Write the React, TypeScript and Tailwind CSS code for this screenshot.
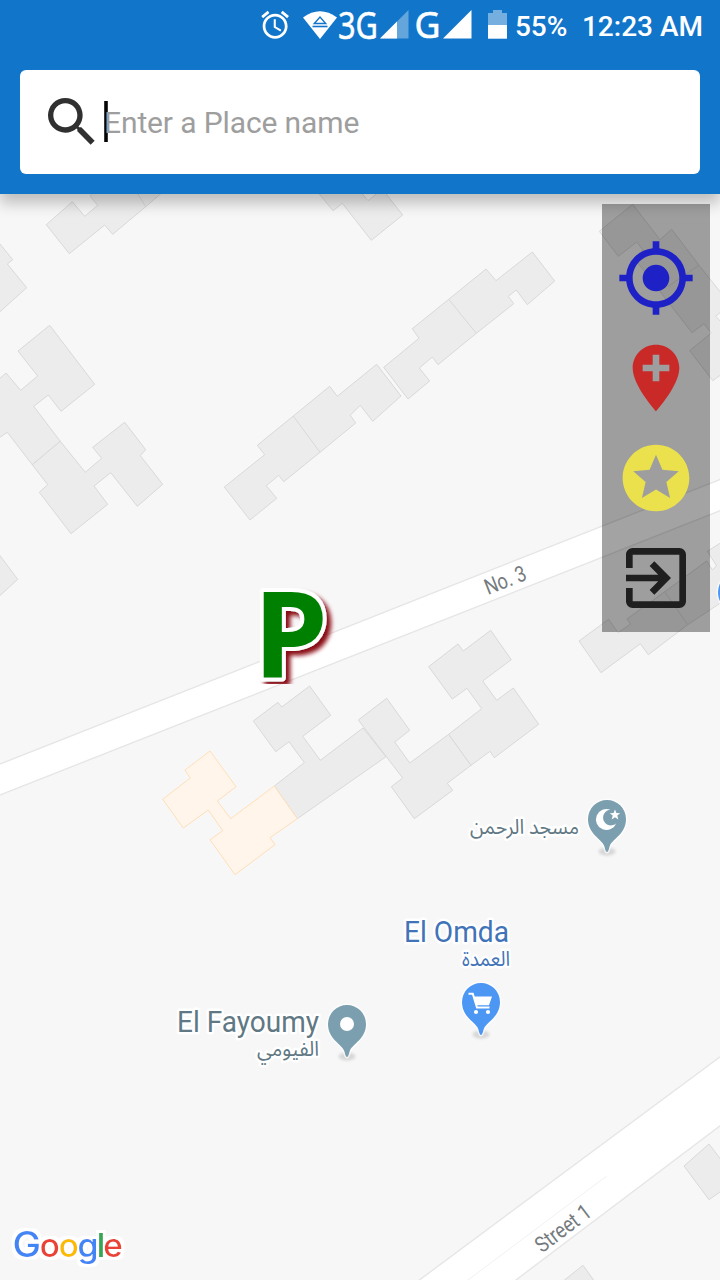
import React from "react";

const BLUE = "#1175ca";

function StatusBar() {
  return (
    <div className="flex h-[50px] items-start justify-end pr-[17px] text-white">
      <svg className="h-[50px] w-[260px] shrink-0" viewBox="250 0 260 50" fill="#fff">
        <path
          transform="translate(258.5 8.2) scale(1.385)"
          d="M22 5.72l-4.6-3.86-1.29 1.53 4.6 3.86L22 5.72zM7.88 3.39L6.6 1.86 2 5.71l1.29 1.53 4.59-3.85zM12.5 8H11v6l4.75 2.85.75-1.23-4-2.37V8zM12 4c-4.97 0-9 4.03-9 9s4.02 9 9 9c4.97 0 9-4.03 9-9s-4.03-9-9-9zm0 16c-3.87 0-7-3.13-7-7s3.13-7 7-7 7 3.13 7 7-3.13 7-7 7z"
        />
        <path d="M303 17.5Q320 5 337 17.5L320 39z" />
        <path d="M314.3 23.5L320 17L325.7 23.5z" fill="none" stroke={BLUE} strokeWidth="1.4" />
        <path d="M312.5 26.5H327.5" stroke={BLUE} strokeWidth="1.6" />
        <text x="338" y="39" fontSize="37.5" fontFamily="Noto Sans, sans-serif" stroke="#fff" strokeWidth="0.5" textLength="40" lengthAdjust="spacingAndGlyphs">3G</text>
        <path d="M408.5 10V38.5H380z" opacity="0.35" />
        <path d="M397 21.5V38.5H380z" />
        <text x="414.5" y="37.5" fontSize="36" fontFamily="Noto Sans, sans-serif" stroke="#fff" strokeWidth="0.6" textLength="26" lengthAdjust="spacingAndGlyphs">G</text>
        <path d="M471.5 10V38.5H443z" />
        <path d="M488 13H493V10H502V13H507V25H488z" opacity="0.42" />
        <path d="M488 25H507V38.7H488z" />
      </svg>
      <span className="ml-[5px] mt-[9px] w-[67px] whitespace-nowrap font-[Roboto,sans-serif] text-[28px] font-medium leading-[36px]">55%</span>
      <span className="mt-[9px] whitespace-nowrap font-[Roboto,sans-serif] text-[28px] font-medium leading-[36px]">12:23 AM</span>
    </div>
  );
}

function SearchBox() {
  return (
    <div className="mx-5 mt-5 flex h-[104px] items-center rounded-[6px] bg-white pl-5">
      <svg className="size-16 shrink-0" viewBox="0 0 24 24" fill="#303030">
        <path d="M15.5 14h-.79l-.28-.27A6.471 6.471 0 0 0 16 9.5 6.5 6.5 0 1 0 9.5 16c1.61 0 3.09-.59 4.23-1.57l.27.28v.79l5 4.99L20.49 19l-4.99-5zm-6 0C7.01 14 5 11.99 5 9.5S7.01 5 9.5 5 14 7.01 14 9.5 11.99 14 9.5 14z" />
      </svg>
      <span className="mb-px h-[41px] w-[4px] bg-linear-to-r from-[#555] via-black to-[#555]" />
      <span className="-ml-[4px] mt-[2px] whitespace-nowrap font-[Roboto,sans-serif] text-[30px] leading-[36px] tracking-[-0.12px] text-[#9e9e9e]">Enter a Place name</span>
    </div>
  );
}

const buildings = [
  "46.3,224.7 72.3,201.7 84.7,216.3 97.7,205.3 90.3,196.3 93,190 165,190 145.7,206.7 112.7,234.3 104.7,225 69.3,253.7",
  "-2,242 0,244 12.7,259.7 7.3,264 26.7,287.7 0,311.7 -2,313",
  "-2,380 6,373 20.7,390.3 37.7,376 18,351 49.7,325.3 94.7,384.3 61,411.3 48.3,395 33.7,406.3 60.3,441.3 32.3,464.7 7.3,432.3 -2,438.5",
  "60.3,441.3 85.3,472.3 101.7,458.3 92.7,447.3 124.7,422.3 145.7,449.7 140.3,455.7 162.7,484.3 137.3,506.3 110.7,472.7 94,486 107.7,504.3 71,533.7 39.3,492.3 47.7,484.7 32.3,464.7",
  "-2,553 17.7,579.3 -2,597.5",
  "316,190 333,210.7 342.3,203.3 371.3,240.3 402.7,215 383,190 380,191 368,200.7 359,190",
  "383.7,367.3 419,338.3 412.3,328.7 448.7,299.3 486,269 496,280.7 532.3,252 554.7,281 527.3,304.7 516.3,290 508.3,296.3 513.7,303.7 476.3,333.3 438,364.7 432.3,357 419.3,368 429.7,381 408,399",
  "224.3,487 264.7,454.7 257.3,445.3 293.3,416 329.7,386.3 337.3,396.3 376.7,364.3 401,396 372.7,421.3 360.3,405.3 350.3,415.3 355.7,423 320,452.3 283.7,481.7 278.7,475.3 266.3,485.7 276.7,498.3 250,520",
  "599.3,231.3 632.7,204.3 660,239.7 671.7,229.3 699,265.3 722,294 722,311 715.7,316.3 722,323 722,374 712.7,380.7 689.7,350.7 711.3,333 704,323.7 692,332.7 634,258 643,250 636.7,242 618.3,256.3",
  "579,641 608.7,619.3 618,632.7 630.7,624 627,619 664.7,591.7 706.7,561 712.3,569.7 716.7,566 707.3,551.3 722,542 722,602 687.7,624.7 648.3,654.7 640.3,643.7 601,672.7",
  "253.3,721 278,702.3 281.7,707 309.7,686 330.7,715.3 302.7,736.3 320.3,760.3 363,728 386,756.7 297.3,818.7 274.3,786 304.3,762.7 289,741.7 275.7,751.7",
  "358.3,720 386.7,698.3 409.7,730.3 394.7,742 409.7,763 448.7,734.3 471,765.3 447.3,783.3 452.7,790.3 414.3,818.7 391.3,786.7 402.7,778",
  "448.7,734.3 481.7,708.7 467,688.3 452.3,699 428.7,666.7 458,644 463.3,651 490.7,630.3 511.3,659.7 482.7,681 496.7,700.3 513.3,688 538.7,724.3 494.3,757.7 490,751.3 471,765.3",
  "684,1166 709,1144 722,1161 722,1190.5 709,1199.7",
  "562,1282 583,1265.3 595,1282",
];

const walls = [
  "M138 194L145.7 206.7",
  "M448.7 299.3L476.3 333.3",
  "M293.3 416L320 452.3",
  "M699 265.3L667.7 286.7",
  "M664.7 591.7L687.7 624.7",
];

function Pin({ x, y, color, children }: { x: number; y: number; color: string; children?: React.ReactNode }) {
  return (
    <g transform={`translate(${x} ${y})`}>
      <ellipse cx="0" cy="32.5" rx="8.5" ry="4" fill="#000" opacity="0.13" filter="url(#soft)" />
      <path
        d="M0 33C-1.6 33-1.9 29-3 26.5C-5.5 20-19 15-19 0A19 19 0 1 1 19 0C19 15 5.5 20 3 26.5C1.9 29 1.6 33 0 33z"
        fill={color}
        stroke="#fff"
        strokeWidth="3"
        strokeOpacity="0.7"
        paintOrder="stroke"
      />
      {children}
    </g>
  );
}

interface LabelProps {
  x: number;
  y: number;
  width: number;
  size: number;
  color: string;
  text: string;
  rotate?: number;
}

function Label({ x, y, width, size, color, text, rotate = 0 }: LabelProps) {
  return (
    <text
      transform={`translate(${x} ${y}) rotate(${rotate})`}
      fontSize={size}
      fontFamily="Roboto, Noto Sans Arabic, Noto Sans, DejaVu Sans, sans-serif"
      fill={color}
      stroke="#fff"
      strokeWidth="5"
      strokeLinejoin="round"
      paintOrder="stroke"
      textLength={width}
      lengthAdjust="spacingAndGlyphs"
    >
      {text}
    </text>
  );
}

const logo = [
  { c: "G", x: 12.5, w: 28.5, size: 35.5, fill: "#4285f4" },
  { c: "o", x: 39.7, w: 20, size: 32, fill: "#ea4335" },
  { c: "o", x: 58.7, w: 20, size: 32, fill: "#fbbc05" },
  { c: "g", x: 77.5, w: 21, size: 32, fill: "#4285f4" },
  { c: "l", x: 96.5, w: 9, size: 33, fill: "#34a853" },
  { c: "e", x: 103.2, w: 19.5, size: 32, fill: "#ea4335" },
];

function MapCanvas() {
  return (
    <svg className="block h-[1086px] w-[720px]" viewBox="0 194 720 1086">
      <defs>
        <filter id="soft" x="-50%" y="-50%" width="200%" height="200%">
          <feGaussianBlur stdDeviation="1.4" />
        </filter>
        <filter id="markerShadow" x="-20%" y="-20%" width="150%" height="150%">
          <feDropShadow dx="4.5" dy="4.5" stdDeviation="2.2" floodColor="#8b0f12" floodOpacity="1" />
        </filter>
        <filter id="halo" x="-10%" y="-30%" width="120%" height="160%">
          <feMorphology in="SourceAlpha" operator="dilate" radius="3" result="grown" />
          <feFlood floodColor="#fff" />
          <feComposite in2="grown" operator="in" result="edge" />
          <feMerge>
            <feMergeNode in="edge" />
            <feMergeNode in="SourceGraphic" />
          </feMerge>
        </filter>
        <clipPath id="markerBox">
          <rect x="250" y="580" width="90" height="104" />
        </clipPath>
      </defs>
      <rect x="0" y="194" width="720" height="1086" fill="#f7f7f7" />
      <g fill="#fff" stroke="#e6e6e6" strokeWidth="1.4">
        <path d="M-4 765.6L724 478L724 509.2L-4 796.6z" />
        <path d="M410 1287L724 1053.8L724 1122.8L506 1287.5z" />
      </g>
      <path d="M468 1280L606.7 1176" stroke="#f1f1f1" />
      <g fill="#ececec" stroke="#d9d9d9" strokeWidth="1">
        {buildings.map((points) => (
          <polygon key={points} points={points} />
        ))}
        {walls.map((d) => (
          <path key={d} d={d} />
        ))}
      </g>
      <polygon
        fill="#fff5eb"
        stroke="#ffdfb8"
        points="162.7,799.3 190.3,778 185,770 210,751 236,786.7 217.3,801 230.7,818.7 274.3,786 297.3,818.7 270,837.7 275,844.7 235,874.7 210,839.7 222.7,830.7 208.3,810 183.3,828"
      />

      <Label x={488} y={595} width={43} size={22} color="#767b80" text="No. 3" rotate={-21.5} />
      <Label x={542} y={1253.5} width={64} size={22} color="#767b80" text="Street 1" rotate={-37} />

      <Label x={470} y={834} width={109} size={20.5} color="#5f7884" text="مسجد الرحمن" />
      <Label x={404} y={942} width={105} size={30} color="#4173b8" text="El Omda" />
      <Label x={462} y={966} width={48} size={20.5} color="#4173b8" text="العمدة" />
      <Label x={177} y={1032} width={142} size={30} color="#5f7884" text="El Fayoumy" />
      <Label x={257} y={1056} width={62} size={20.5} color="#5f7884" text="الفيومي" />

      <Pin x={607} y={819} color="#7c9fb0">
        <path d="M3.5 -9.2A10.5 10.5 0 1 0 9.3 4.2A7.8 7.8 0 1 1 3.5 -9.2z" fill="#fff" />
        <path d="M8 -9.5L9.4 -6L13.2 -5.8L10.3 -3.4L11.3 .4L8 -1.8L4.7 .4L5.7 -3.4L2.8 -5.8L6.6 -6z" fill="#fff" />
      </Pin>
      <Pin x={481} y={1002} color="#4c97f4">
        <path d="M-12.5 -8.3H-8.2L-4 5.5H8.5" fill="none" stroke="#fff" strokeWidth="2" />
        <path d="M-8 -5.5H11L8 3.2H-4.8z" fill="#fff" />
        <circle cx="-5" cy="10" r="2.1" fill="#fff" />
        <circle cx="7" cy="10" r="2.1" fill="#fff" />
      </Pin>
      <Pin x={347} y={1024} color="#7c9fb0">
        <circle r="7" fill="#fff" />
      </Pin>
      <Pin x={737} y={592} color="#4c97f4" />

      <g clipPath="url(#markerBox)">
        <text
          x="253"
          y="677.5"
          fontSize="119.5"
          fontWeight="700"
          fontFamily="Open Sans, sans-serif"
          fill="#008000"
          stroke="#fff"
          strokeWidth="8"
          strokeLinejoin="round"
          paintOrder="stroke"
          filter="url(#markerShadow)"
        >
          P
        </text>
      </g>

      <text y="1256.5" fontFamily="Inter, sans-serif" fontWeight="500" filter="url(#halo)">
        {logo.map((l) => (
          <tspan key={l.x} x={l.x} fontSize={l.size} fill={l.fill} textLength={l.w} lengthAdjust="spacingAndGlyphs">{l.c}</tspan>
        ))}
      </text>
    </svg>
  );
}

const tools = [
  {
    name: "My location",
    fill: "#1e22c6",
    d: "M12 8c-2.21 0-4 1.79-4 4s1.79 4 4 4 4-1.79 4-4-1.79-4-4-4zm8.94 3A8.994 8.994 0 0 0 13 3.06V1h-2v2.06A8.994 8.994 0 0 0 3.06 11H1v2h2.06A8.994 8.994 0 0 0 11 20.94V23h2v-2.06A8.994 8.994 0 0 0 20.94 13H23v-2h-2.06zM12 19c-3.87 0-7-3.13-7-7s3.13-7 7-7 7 3.13 7 7-3.13 7-7 7z",
  },
  {
    name: "Add location",
    fill: "#c92a27",
    d: "M12 2C8.14 2 5 5.14 5 9c0 5.25 7 13 7 13s7-7.75 7-13c0-3.86-3.14-7-7-7zm4 8h-3v3h-2v-3H8V8h3V5h2v3h3v2z",
  },
  {
    name: "Favourites",
    fill: "#ebe14d",
    d: "M11.99 2C6.47 2 2 6.48 2 12s4.47 10 9.99 10C17.52 22 22 17.52 22 12S17.52 2 11.99 2zm4.24 16L12 15.45 7.77 18l1.12-4.81-3.73-3.23 4.92-.42L12 5l1.92 4.53 4.92.42-3.73 3.23L16.23 18z",
  },
  {
    name: "Exit",
    fill: "#1f1f1f",
    d: "M10.09 15.59L11.5 17l5-5-5-5-1.41 1.41L12.67 11H3v2h9.67l-2.58 2.59zM19 3H5c-1.11 0-2 .9-2 2v4h2V5h14v14H5v-4H3v4c0 1.1.89 2 2 2h14c1.1 0 2-.9 2-2V5c0-1.1-.9-2-2-2z",
  },
];

function ToolPanel() {
  return (
    <div className="absolute right-[10px] top-[10px] flex h-[428px] w-[108px] flex-col items-center gap-5 bg-black/36 pt-[34px]">
      {tools.map((t) => (
        <button key={t.name} aria-label={t.name} className="size-20 shrink-0">
          <svg className="size-20" viewBox="0 0 24 24" fill={t.fill}>
            <path d={t.d} />
          </svg>
        </button>
      ))}
    </div>
  );
}

export default function App() {
  return (
    <div className="flex h-[1280px] w-[720px] flex-col overflow-hidden bg-[#f7f7f7]">
      <header className="relative z-10 h-[194px] shrink-0 bg-[#1175ca] shadow-[0_9px_14px_0_rgba(0,0,0,0.24)]">
        <StatusBar />
        <SearchBox />
      </header>
      <main className="relative">
        <MapCanvas />
        <ToolPanel />
      </main>
    </div>
  );
}
